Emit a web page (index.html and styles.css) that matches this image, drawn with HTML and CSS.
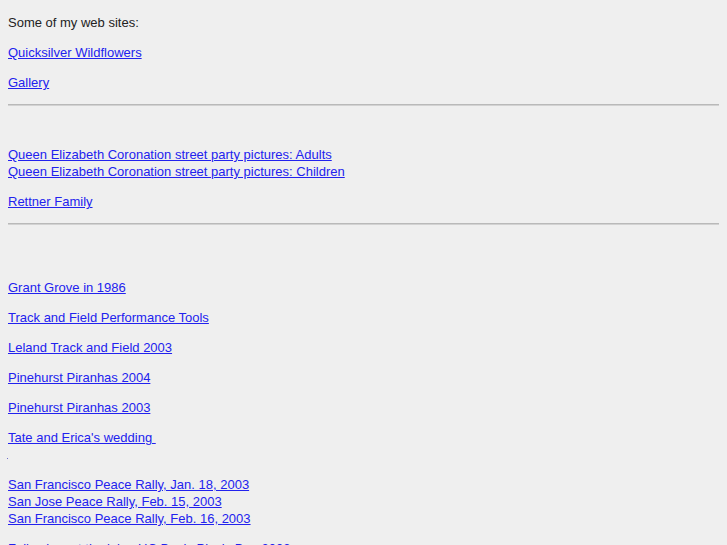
FILE: index.html
```html
<!DOCTYPE html>
<html>
<head>
<meta charset="utf-8">
<title>Some of my web sites</title>
<link rel="stylesheet" href="styles.css">
</head>
<body>
<p>Some of my web sites:</p>
<p><a href="#">Quicksilver Wildflowers</a></p>
<p><a href="#">Gallery</a></p>
<hr class="rule rule-first">
<p><a href="#">Queen Elizabeth Coronation street party pictures: Adults</a><br>
<a href="#">Queen Elizabeth Coronation street party pictures: Children</a></p>
<p><a href="#">Rettner Family</a></p>
<hr class="rule rule-second">
<p><a href="#">Grant Grove in 1986</a></p>
<p><a href="#">Track and Field Performance Tools</a></p>
<p><a href="#">Leland Track and Field 2003</a></p>
<p><a href="#">Pinehurst Piranhas 2004</a></p>
<p><a href="#">Pinehurst Piranhas 2003</a></p>
<p><a href="#">Tate and Erica's wedding&nbsp;</a><br>
<a href="#" class="dot"></a></p>
<p><a href="#">San Francisco Peace Rally, Jan. 18, 2003</a><br>
<a href="#">San Jose Peace Rally, Feb. 15, 2003</a><br>
<a href="#">San Francisco Peace Rally, Feb. 16, 2003</a></p>
<p><a href="#">Fall colors at the lake, UC Davis Picnic Day 2003</a></p>
</body>
</html>
```
FILE: styles.css
```css
html {
  background: #efefef;
}
body {
  margin: 0;
  padding: 14px 8px 0;
  background: #efefef;
  color: #222;
  font-family: "Liberation Sans", Arial, sans-serif;
  font-size: 13px;
  line-height: 17px;
}
p {
  margin: 0 0 13px;
}
a {
  color: #2222ee;
  text-decoration: underline;
}
.rule {
  height: 0;
  margin: 0;
  border: none;
  border-top: 1px solid #b9b9b9;
  border-bottom: 1px solid #d2d2d2;
}
.rule-first {
  margin-bottom: 40px;
}
.rule-second {
  margin-bottom: 54px;
}
.dot {
  display: inline-block;
  width: 1px;
  height: 1px;
  margin-left: -1px;
  background: #7070c8;
  vertical-align: baseline;
}
```
